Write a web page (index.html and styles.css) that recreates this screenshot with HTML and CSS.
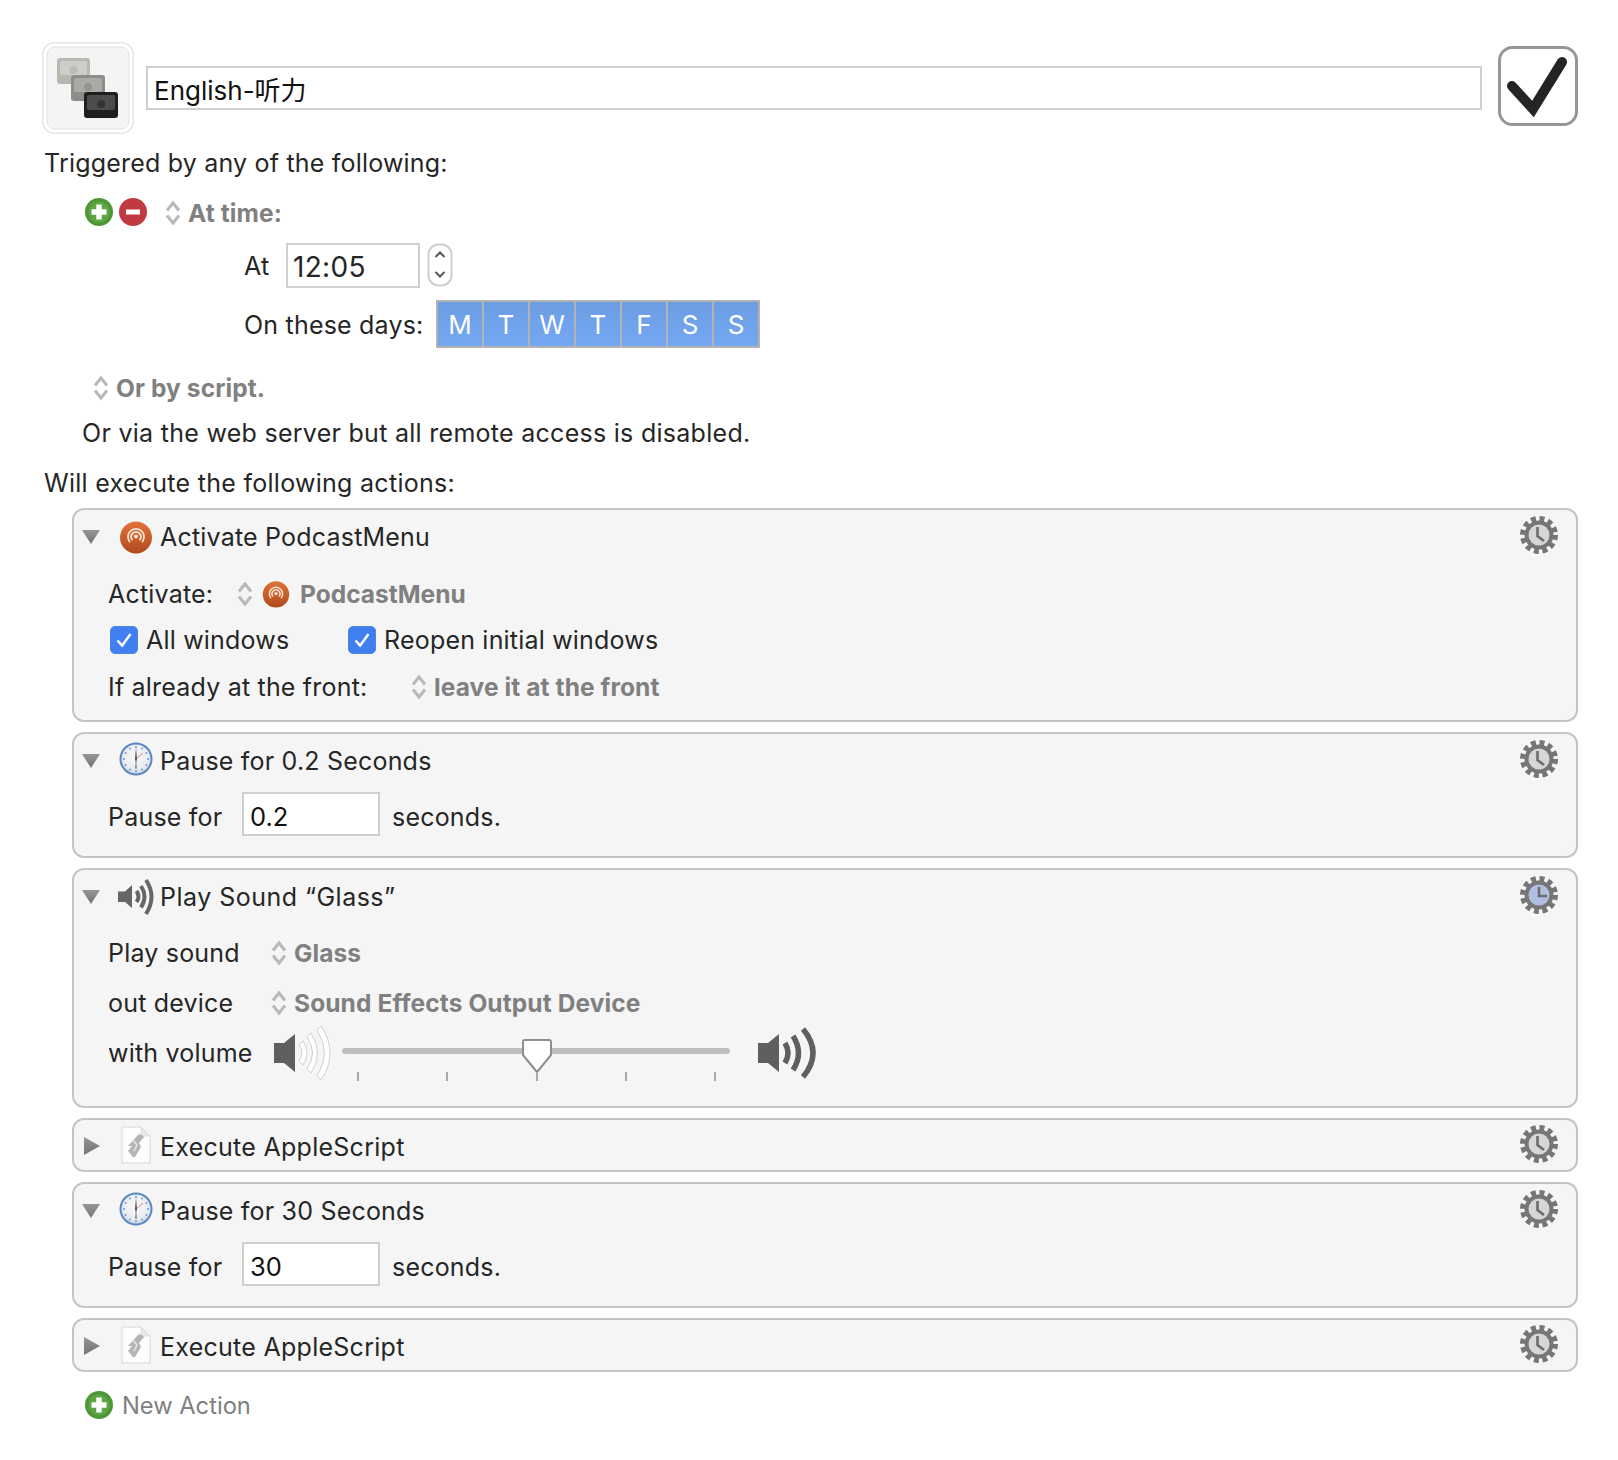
FILE: index.html
```html
<!DOCTYPE html>
<html lang="en">
<head>
<meta charset="utf-8">
<title>English-听力</title>
<link rel="stylesheet" href="styles.css">
</head>
<body>
<svg class="defs" width="0" height="0" aria-hidden="true">
  <defs>
    <linearGradient id="pod" x1="0" y1="0" x2="0" y2="1"><stop offset="0" stop-color="#e0743a"/><stop offset="1" stop-color="#b04a1b"/></linearGradient>
    <linearGradient id="tri" x1="0" y1="0" x2="0" y2="1"><stop offset="0" stop-color="#969696"/><stop offset="1" stop-color="#747474"/></linearGradient>
    <radialGradient id="face" cx="0.5" cy="0.42" r="0.62"><stop offset="0" stop-color="#f8f8f8"/><stop offset="0.7" stop-color="#e9ecf0"/><stop offset="1" stop-color="#c6cfdd"/></radialGradient>
    <symbol id="updown" viewBox="0 0 16 26">
      <path d="M2 10.500 L8 3 L14 10.500 M2 15.500 L8 23 L14 15.500" fill="none" stroke="#b9b9b9" stroke-width="3"/>
    </symbol>
    <symbol id="plus" viewBox="0 0 28 28">
      <circle cx="14" cy="14" r="14" fill="#4f9637"/>
      <circle cx="14" cy="14" r="10.500" fill="#5ca644"/>
      <path d="M14 6.500 V21.500 M6.500 14 H21.500" stroke="#fff" stroke-width="5.500"/>
    </symbol>
    <symbol id="minus" viewBox="0 0 28 28">
      <circle cx="14" cy="14" r="14" fill="#c23a41"/>
      <path d="M7 14 H21" stroke="#fff" stroke-width="5"/>
    </symbol>
    <symbol id="down" viewBox="0 0 18 14"><path d="M0 0 H18 L9 14 Z" fill="url(#tri)"/></symbol>
    <symbol id="right" viewBox="0 0 16 18"><path d="M0 0 L16 9 L0 18 Z" fill="url(#tri)"/></symbol>
    <symbol id="gear" viewBox="0 0 38 38">
      <circle cx="19" cy="19" r="16" fill="none" stroke="#767676" stroke-width="6" stroke-dasharray="4.800 3.578"/>
      <circle cx="19" cy="19" r="14.500" fill="#767676"/>
      <circle cx="19" cy="19" r="10.500" fill="#d6d6d6"/>
      <path d="M17.500 11 V20 L24 25" fill="none" stroke="#6c6c6c" stroke-width="2.600"/>
    </symbol>
    <symbol id="gear-blue" viewBox="0 0 38 38">
      <circle cx="19" cy="19" r="16" fill="none" stroke="#767676" stroke-width="6" stroke-dasharray="4.800 3.578"/>
      <circle cx="19" cy="19" r="14.500" fill="#767676"/>
      <circle cx="19" cy="19" r="10.500" fill="#aebfe2"/>
      <path d="M19 11 V20 H27" fill="none" stroke="#6c6c6c" stroke-width="2.600"/>
    </symbol>
    <symbol id="podcast" viewBox="0 0 34 34">
      <circle cx="17" cy="17.500" r="16" fill="url(#pod)"/>
      <g fill="none" stroke="#fbe2d3" stroke-width="1.800" stroke-linecap="round">
        <path d="M10.500 21.500 A8 8 0 1 1 23.500 21.500"/>
        <path d="M13 19.500 A4.800 4.800 0 1 1 21 19.500"/>
      </g>
      <circle cx="17" cy="16.500" r="2" fill="#fbe2d3"/>
    </symbol>
    <symbol id="clock" viewBox="0 0 34 34">
      <circle cx="17" cy="17" r="16.500" fill="#5a86c2"/>
      <circle cx="17" cy="17" r="14.500" fill="url(#face)"/>
      <g fill="#6e9ad6">
        <circle cx="17" cy="5" r="1"/><circle cx="23" cy="6.600" r="1"/><circle cx="27.400" cy="11" r="1"/><circle cx="29" cy="17" r="1"/><circle cx="27.400" cy="23" r="1"/><circle cx="23" cy="27.400" r="1"/><circle cx="17" cy="29" r="1"/><circle cx="11" cy="27.400" r="1"/><circle cx="6.600" cy="23" r="1"/><circle cx="5" cy="17" r="1"/><circle cx="6.600" cy="11" r="1"/><circle cx="11" cy="6.600" r="1"/>
      </g>
      <path d="M17 17 L24 11" stroke="#d9776a" stroke-width="0.900"/>
      <path d="M17 5 L17.800 17 L17 21 L16.200 17 Z" fill="#333"/>
      <path d="M17 17 L17.600 26 L17 27 L16.400 26 Z" fill="#444"/>
    </symbol>
    <symbol id="doc" viewBox="0 0 30 38">
      <path d="M1 1 H20 L29 10 V37 H1 Z" fill="#fdfdfd" stroke="#d8d8d8"/>
      <path d="M20 1 V10 H29 Z" fill="#e8e8e8" stroke="#d2d2d2" stroke-width="0.600"/>
      <path d="M7 20 L17 9 Q20 7 23 11 L18 17 L20 21 L14 31 Q12 32 11 30 L7 25 L11 20 Z" fill="#b5b5b5"/>
      <path d="M12 14 L16 19 L13 25" fill="none" stroke="#e6e6e6" stroke-width="1.400"/>
    </symbol>
    <symbol id="sound" viewBox="0 0 38 38">
      <path d="M1 13.500 H8 L15 7 V30 L8 24 H1 Z" fill="#666"/>
      <g fill="none" stroke="#666" stroke-width="4">
        <path d="M19.500 13 Q23.500 18.500 19.500 24"/>
        <path d="M24 8 Q31 18.500 24 29.500"/>
        <path d="M29 2 Q40 18.500 29 36"/>
      </g>
    </symbol>
  </defs>
</svg>

<main class="page">
  <header class="head">
    <div class="group-icon">
      <svg class="group-svg" viewBox="0 0 92 92" width="92" height="92">
        <rect x="0.750" y="0.750" width="90.500" height="90.500" rx="12" fill="#fff" stroke="#e6e6e6" stroke-width="1.500"/>
        <rect x="5" y="5" width="82" height="82" rx="8" fill="#f4f4f4" stroke="#e2e2e2" stroke-width="1"/>
        <rect x="15" y="16" width="33" height="26" rx="3" fill="#b9b7b2"/>
        <rect x="18" y="19" width="27" height="14" rx="2" fill="#cfcdc9"/>
        <circle cx="31.500" cy="28" r="4" fill="#bdbbb6"/>
        <rect x="29" y="33" width="34" height="26" rx="3" fill="#8f8d89"/>
        <rect x="32" y="36" width="28" height="14" rx="2" fill="#acaaa6"/>
        <circle cx="46" cy="45" r="4" fill="#95938f"/>
        <rect x="42" y="50" width="34" height="26" rx="3" fill="#1f1f1f"/>
        <rect x="45" y="53" width="28" height="15" rx="2" fill="#4d4d4d"/>
        <circle cx="59" cy="62" r="4" fill="#333"/>
      </svg>
    </div>
    <div class="title-field">English-听力</div>
    <div class="enable">
      <svg viewBox="0 0 80 80" width="80" height="80">
        <rect x="1.500" y="1.500" width="77" height="77" rx="13" fill="#fff" stroke="#969696" stroke-width="3"/>
        <path d="M14 40 L35 63 L64 16" fill="none" stroke="#242424" stroke-width="10" stroke-linecap="round" stroke-linejoin="miter"/>
      </svg>
    </div>
  </header>

  <p class="line trig-title">Triggered by any of the following:</p>

  <div class="line trig-row">
    <svg class="ic28 trig-ic"><use href="#plus"/></svg>
    <svg class="ic28 trig-ic minus-ic"><use href="#minus"/></svg>
    <svg class="updown trig-arrows"><use href="#updown"/></svg>
    <span class="popup">At time:</span>
  </div>

  <div class="at-row">
    <span class="at-label">At</span>
    <div class="field time-field">12:05</div>
    <div class="stepper">
      <svg viewBox="0 0 26 44" width="26" height="44">
        <rect x="1.500" y="1.500" width="23" height="41" rx="10" fill="#fff" stroke="#cfcfcf" stroke-width="2"/>
        <path d="M8.500 14 L13 9.500 L17.500 14 M8.500 29 L13 33.500 L17.500 29" fill="none" stroke="#555" stroke-width="2"/>
      </svg>
    </div>
  </div>

  <div class="days-row">
    <span class="days-label">On these days:</span>
    <div class="days">
      <span class="day">M</span><span class="day">T</span><span class="day">W</span><span class="day">T</span><span class="day">F</span><span class="day">S</span><span class="day">S</span>
    </div>
  </div>

  <div class="line script-row">
    <svg class="updown"><use href="#updown"/></svg>
    <span class="popup">Or by script.</span>
  </div>
  <p class="line web-row">Or via the web server but all remote access is disabled.</p>
  <p class="line exec-title">Will execute the following actions:</p>

  <section class="actions">
    <article class="card">
      <div class="card-head">
        <svg class="tri-d"><use href="#down"/></svg>
        <svg class="ac-icon"><use href="#podcast"/></svg>
        <span class="ac-title">Activate PodcastMenu</span>
        <svg class="gear"><use href="#gear"/></svg>
      </div>
      <div class="row row-activate">
        <span class="l-activate">Activate:</span>
        <svg class="updown"><use href="#updown"/></svg>
        <svg class="mini-pod"><use href="#podcast"/></svg>
        <span class="popup">PodcastMenu</span>
      </div>
      <div class="row row-windows">
        <span class="cb"><svg viewBox="0 0 28 28" width="28" height="28"><path d="M7 14.500 L12 20 L21 7.500" fill="none" stroke="#fff" stroke-width="2.600"/></svg></span>
        <span class="cb-label l-all">All windows</span>
        <span class="cb"><svg viewBox="0 0 28 28" width="28" height="28"><path d="M7 14.500 L12 20 L21 7.500" fill="none" stroke="#fff" stroke-width="2.600"/></svg></span>
        <span class="cb-label">Reopen initial windows</span>
      </div>
      <div class="row row-front">
        <span class="l-front">If already at the front:</span>
        <svg class="updown"><use href="#updown"/></svg>
        <span class="popup">leave it at the front</span>
      </div>
    </article>

    <article class="card">
      <div class="card-head">
        <svg class="tri-d"><use href="#down"/></svg>
        <svg class="ac-icon ac-clock"><use href="#clock"/></svg>
        <span class="ac-title">Pause for 0.2 Seconds</span>
        <svg class="gear"><use href="#gear"/></svg>
      </div>
      <div class="row row-pause">
        <span class="l-pause">Pause for</span>
        <div class="field pause-field">0.2</div>
        <span>seconds.</span>
      </div>
    </article>

    <article class="card">
      <div class="card-head">
        <svg class="tri-d"><use href="#down"/></svg>
        <svg class="ac-sound"><use href="#sound"/></svg>
        <span class="ac-title ac-title-quote">Play Sound “Glass”</span>
        <svg class="gear"><use href="#gear-blue"/></svg>
      </div>
      <div class="row row-sound1">
        <span class="l-sound">Play sound</span>
        <svg class="updown"><use href="#updown"/></svg>
        <span class="popup">Glass</span>
      </div>
      <div class="row row-sound2">
        <span class="l-sound">out device</span>
        <svg class="updown"><use href="#updown"/></svg>
        <span class="popup">Sound Effects Output Device</span>
      </div>
      <div class="row row-volume">
        <span class="l-volume">with volume</span>
        <svg class="vol-low" viewBox="0 0 60 54" width="60" height="54">
          <path d="M1 17 H11 L22 8 V46 L11 37 H1 Z" fill="#5f5f5f"/>
          <g fill="#fff" stroke="#c4c4c4" stroke-width="0.800">
            <path d="M26 19 Q32 27 26 35 L30 39 Q38 27 30 15 Z"/>
            <path d="M34 11 Q45 27 34 43 L38 47 Q51 27 38 7 Z"/>
            <path d="M44 4 Q59 27 44 50 L48 54 Q66 27 48 0 Z"/>
          </g>
        </svg>
        <div class="slider">
          <div class="track"></div>
          <svg class="thumb" viewBox="0 0 32 36" width="32" height="36">
            <path d="M4 2 H28 Q30 2 30 4 V17 L16 34 L2 17 V4 Q2 2 4 2 Z" fill="#fff" stroke="#8f8f8f" stroke-width="2" stroke-linejoin="round"/>
          </svg>
          <div class="ticks"><i class="tick"></i><i class="tick"></i><i class="tick"></i><i class="tick"></i><i class="tick"></i></div>
        </div>
        <svg class="vol-high" viewBox="0 0 60 54" width="60" height="54">
          <path d="M1 17 H11 L22 8 V46 L11 37 H1 Z" fill="#5f5f5f"/>
          <g fill="none" stroke="#5f5f5f" stroke-width="5.500">
            <path d="M28 17 Q34 27 28 37"/>
            <path d="M36 10 Q47 27 36 44"/>
            <path d="M46 3 Q66 27 46 51"/>
          </g>
        </svg>
      </div>
    </article>

    <article class="card card-closed">
      <div class="card-head">
        <svg class="tri-r"><use href="#right"/></svg>
        <svg class="doc"><use href="#doc"/></svg>
        <span class="ac-title">Execute AppleScript</span>
        <svg class="gear"><use href="#gear"/></svg>
      </div>
    </article>

    <article class="card">
      <div class="card-head">
        <svg class="tri-d"><use href="#down"/></svg>
        <svg class="ac-icon ac-clock"><use href="#clock"/></svg>
        <span class="ac-title">Pause for 30 Seconds</span>
        <svg class="gear"><use href="#gear"/></svg>
      </div>
      <div class="row row-pause">
        <span class="l-pause">Pause for</span>
        <div class="field pause-field">30</div>
        <span>seconds.</span>
      </div>
    </article>

    <article class="card card-closed">
      <div class="card-head">
        <svg class="tri-r"><use href="#right"/></svg>
        <svg class="doc"><use href="#doc"/></svg>
        <span class="ac-title">Execute AppleScript</span>
        <svg class="gear"><use href="#gear"/></svg>
      </div>
    </article>
  </section>

  <div class="line new-action">
    <svg class="ic28"><use href="#plus"/></svg>
    <span class="new-label">New Action</span>
  </div>
</main>
</body>
</html>
```

FILE: styles.css
```css
* { box-sizing: border-box; }
html, body { margin: 0; padding: 0; background: #fff; }
body {
  width: 1618px;
  height: 1460px;
  overflow: hidden;
  font-family: Inter, "Noto Sans CJK SC", "Noto Sans", sans-serif;
  font-size: 25px;
  letter-spacing: 0.2px;
  color: #262626;
}
.defs { position: absolute; }
.page { padding: 42px 40px 0 42px; display: flex; flex-direction: column; }
p { margin: 0; }

.head { display: flex; align-items: center; height: 92px; }
.group-icon { width: 92px; height: 92px; flex: none; }
.group-svg { display: block; }
.title-field {
  flex: 1;
  margin: 0 16px 0 12px;
  height: 44px;
  border: 2px solid #cfcfcf;
  background: #fff;
  padding: 2px 0 0 6px;
  font-size: 26px;
  letter-spacing: 0;
  line-height: 42px;
  color: #111;
}
.enable { width: 80px; height: 80px; flex: none; margin-bottom: 5px; }
.enable svg { display: block; }

.line { display: flex; align-items: center; height: 34px; }
.trig-title { margin-top: 12px; padding-left: 2px; }
.trig-row { margin-top: 16px; padding-left: 43px; }
.ic28 { width: 28px; height: 28px; flex: none; }
.trig-ic { margin-bottom: 2px; }
.minus-ic { margin-left: 6px; }
.updown { width: 16px; height: 26px; flex: none; }
.trig-arrows { margin-left: 18px; }
.popup { font-weight: 700; color: #808080; margin-left: 7px; font-size: 24.500px; letter-spacing: 0.1px; }

.at-row { display: flex; align-items: center; height: 46px; margin-top: 12px; padding-left: 202px; }
.at-label { width: 42px; padding-top: 2px; }
.field {
  height: 45px;
  border: 2px solid #cfcfcf;
  background: #fff;
  line-height: 40px;
  padding-left: 6px;
}
.time-field { width: 134px; font-size: 28px; letter-spacing: 0.3px; padding: 2px 0 0 5px; margin-right: 1px; }
.stepper { margin-left: 6px; height: 44px; }
.stepper svg { display: block; }

.days-row { display: flex; align-items: center; height: 48px; margin-top: 12px; padding-left: 202px; }
.days-label { width: 192px; padding-top: 2px; }
.days {
  width: 324px;
  height: 48px;
  background: #b3b3b3;
  padding: 2px;
  display: grid;
  grid-template-columns: repeat(7, 1fr);
  gap: 2px;
}
.day {
  background: linear-gradient(#6c9de3, #74a8f2);
  color: #fff;
  display: flex;
  align-items: center;
  justify-content: center;
  font-size: 26px;
  letter-spacing: 0;
}

.script-row { margin-top: 23px; padding-left: 51px; }
.web-row { margin-top: 11px; padding-left: 40px; letter-spacing: 0.28px; }
.exec-title { margin-top: 16px; padding-left: 2px; letter-spacing: 0.28px; }

.actions { margin: 8px 0 0 30px; display: flex; flex-direction: column; gap: 10px; }
.card {
  border: 2px solid #c4c4c4;
  border-radius: 12px;
  background: #f5f5f5;
  padding: 0 0 0 8px;
}
.card-head { display: flex; align-items: center; height: 54px; }
.card-closed { height: 54px; }
.card-closed .card-head { height: 50px; }
.card-closed .ac-title { padding-top: 4px; letter-spacing: 0.27px; }
.tri-d { width: 18px; height: 14px; flex: none; }
.tri-r { width: 16px; height: 18px; flex: none; margin: 2px 0 0 2px; }
.ac-icon { width: 34px; height: 34px; flex: none; margin-left: 19px; }
.ac-clock { margin-bottom: 5px; }
.ac-sound { width: 38px; height: 38px; flex: none; margin: 0 -2px 0 17px; }
.doc { width: 30px; height: 38px; flex: none; margin-left: 21px; margin-right: 2px; }
.ac-title { margin-left: 7px; }
.ac-title-quote { letter-spacing: 0.48px; }
.gear { width: 38px; height: 38px; flex: none; margin-left: auto; margin-right: 18px; margin-bottom: 4px; }
.card-closed .gear { margin-bottom: 2px; }

.row { display: flex; align-items: center; height: 34px; padding-left: 26px; }
.row-activate { margin-top: 13px; }
.l-activate { width: 129px; }
.mini-pod { width: 28px; height: 28px; flex: none; margin-left: 9px; }
.row-activate .popup { margin-left: 10px; letter-spacing: 0; }
.row-windows { margin-top: 12px; padding-left: 28px; }
.cb {
  width: 28px;
  height: 28px;
  flex: none;
  background: #3f7ff0;
  border: 1px solid #4c84e8;
  border-radius: 5px;
  display: flex;
  align-items: center;
  justify-content: center;
}
.cb-label { margin-left: 8px; }
.l-all { width: 202px; }
.row-front { margin-top: 13px; margin-bottom: 16px; }
.l-front { width: 303px; }

.row-pause { height: 44px; margin-top: 7px; margin-bottom: 17px; }
.l-pause { width: 134px; }
.pause-field { width: 138px; height: 44px; margin: 0 12px 6px 0; line-height: 46px; font-size: 25.500px; letter-spacing: 0; color: #111; }

.row-sound1 { margin-top: 12px; }
.l-sound { width: 163px; }
.row-sound2 { margin-top: 16px; }
.row-volume { height: 54px; margin-top: 6px; margin-bottom: 26px; }
.l-volume { width: 165px; }
.vol-low { flex: none; }
.vol-high { flex: none; margin-left: 27px; }
.slider { position: relative; width: 388px; height: 54px; margin-left: 9px; flex: none; }
.track { position: absolute; left: 0; right: 0; top: 22px; height: 6px; border-radius: 3px; background: #bdbdbd; }
.thumb { position: absolute; left: 179px; top: 12px; }
.ticks { position: absolute; left: 15px; width: 359px; top: 46px; display: flex; justify-content: space-between; }
.tick { display: block; width: 2px; height: 9px; background: #a8a8a8; }

.new-action { margin-top: 16px; padding-left: 43px; }
.new-label { margin-left: 9px; color: #808080; font-size: 23.700px; letter-spacing: 0; }
```
